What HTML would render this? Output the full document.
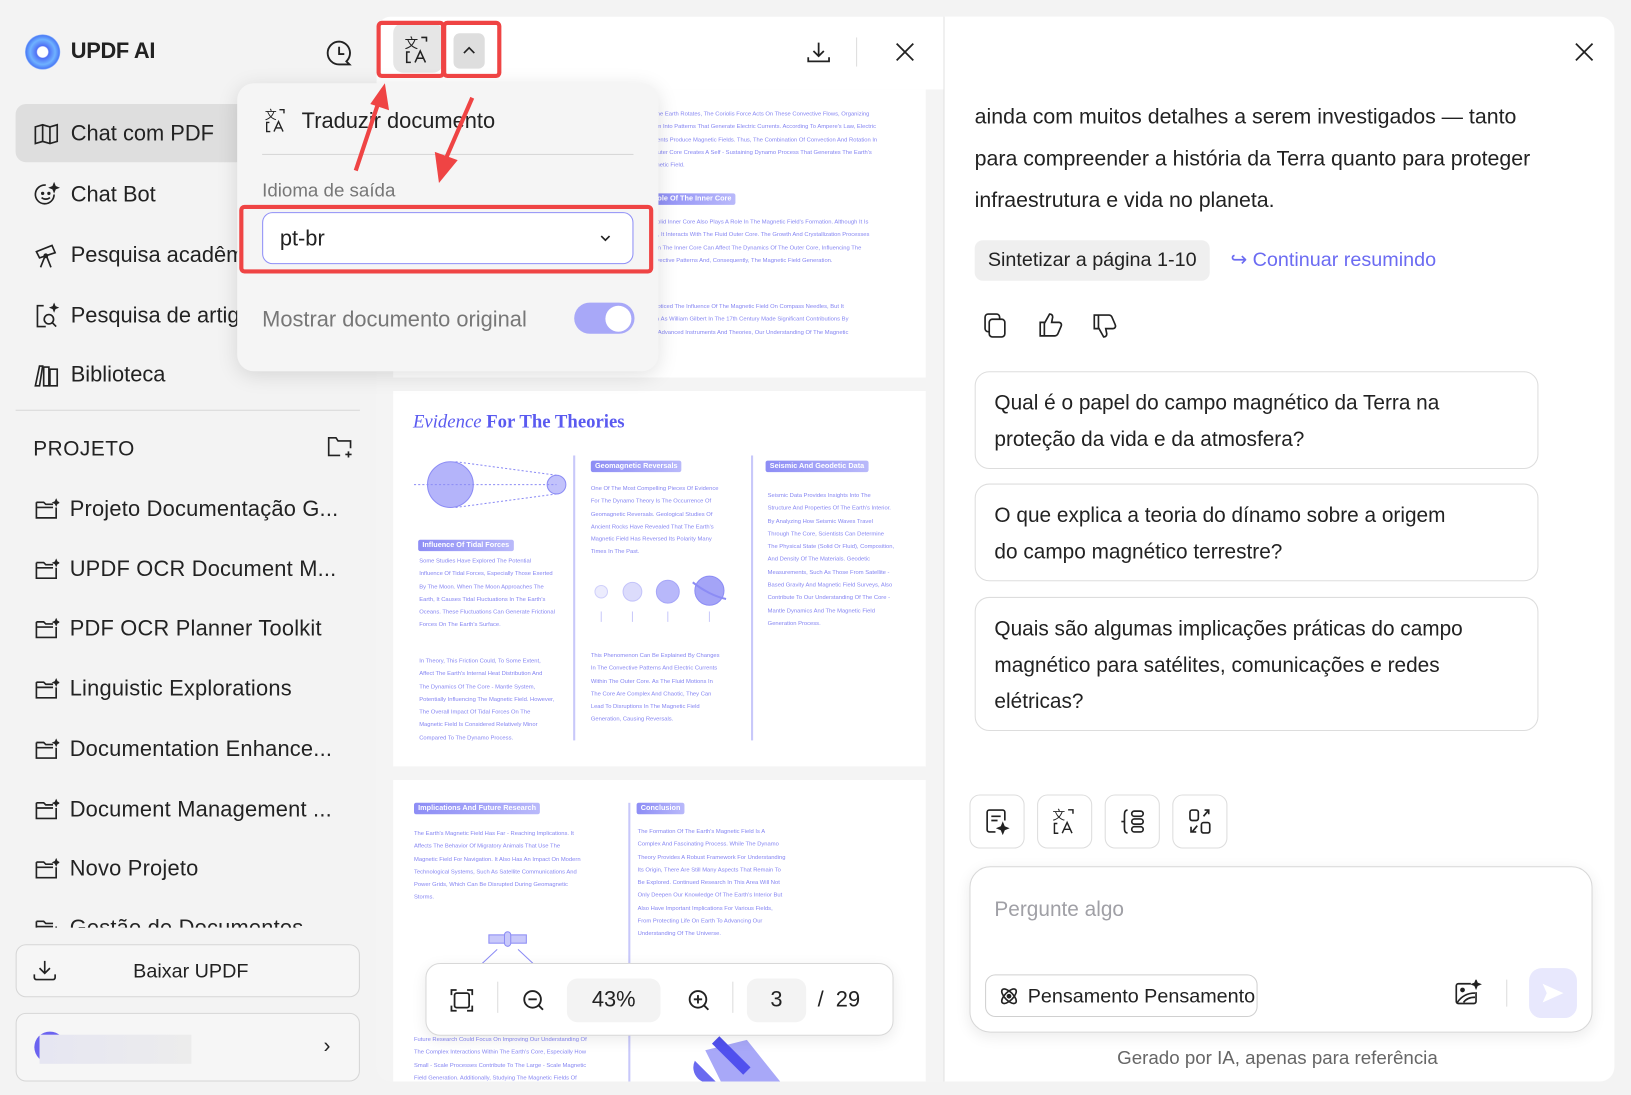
<!DOCTYPE html>
<html><head><meta charset="utf-8"><style>
*{box-sizing:border-box;margin:0;padding:0}
html,body{width:1631px;height:1095px;overflow:hidden;background:#f3f3f3;font-family:"Liberation Sans","Noto Sans CJK SC",sans-serif;color:#222}
#w{position:absolute;left:0;top:0;width:1568px;height:1053px;transform:scale(1.0402,1.0399);transform-origin:0 0;background:#f3f3f3}
.a{position:absolute}
.it{position:absolute;left:32px;display:flex;align-items:center;gap:10px;font-size:21px;white-space:nowrap}
.it svg{flex:none}
.pj{position:absolute;left:33px;display:flex;align-items:center;gap:10px;font-size:21px;white-space:nowrap;letter-spacing:.2px}
.pg{position:absolute;background:#fff;left:378px;width:512px;overflow:hidden}
.t{position:absolute;font-size:5.6px;line-height:12.3px;color:#8585f2;white-space:nowrap}
.hd{position:absolute;background:linear-gradient(90deg,#8d8df5,#b9b9fa);color:#fff;font-size:7px;font-weight:bold;padding:2px 4px;border-radius:2px}
.vl{position:absolute;width:2px;background:#c8c8fa}
.red{position:absolute;border:4px solid #ef4444;border-radius:5px}
.btn4{position:absolute;top:764px;width:53px;height:52px;border:1px solid #ddd;border-radius:10px;background:#fff;display:flex;align-items:center;justify-content:center}
.q{position:absolute;left:937px;width:542px;border:1px solid #ddd;border-radius:14px;background:#fff;font-size:20px;line-height:35px;padding:13px 18px;color:#222}
</style></head><body><div id="w">

<div class="a" style="left:24px;top:33px;width:34px;height:34px;border-radius:50%;background:radial-gradient(circle at 50% 50%,#fff 0 5px,#4f6ff5 6px,#6fb2ff 12px,#4c7cf6 16px,#a7c9ff 17px)"></div>
<div class="a" style="left:68px;top:38px;font-size:21px;font-weight:bold;letter-spacing:-.3px">UPDF AI</div>
<svg class="a" style="left:313px;top:38px" width="26" height="26" viewBox="0 0 26 26" fill="none" stroke="#222" stroke-width="1.8"><path d="M13 2a11 11 0 1 0 0 22h10l-3-3A11 11 0 0 0 13 2z"/><path d="M13 7v7h5"/></svg>

<div class="a" style="left:15px;top:100px;width:260px;height:56px;background:#dedede;border-radius:10px"></div>
<div class="it" style="top:117px"><svg width="26" height="24" viewBox="0 0 26 24" fill="none" stroke="#222" stroke-width="1.6"><path d="M2 5l7-2 7 2 7-2v16l-7 2-7-2-7 2z"/><path d="M9 3v16M16 5v16"/></svg>Chat com PDF</div>
<div class="it" style="top:175px"><svg width="26" height="26" viewBox="0 0 26 26" fill="none" stroke="#222" stroke-width="1.6"><path d="M20 12A9 9 0 1 1 12 3"/><circle cx="9" cy="11" r=".8" fill="#222"/><circle cx="15" cy="11" r=".8" fill="#222"/><path d="M8 15c2 2 6 2 8 0"/><path d="M20 2l1 2.5 2.5 1-2.5 1-1 2.5-1-2.5-2.5-1 2.5-1z" fill="#222"/></svg>Chat Bot</div>
<div class="it" style="top:233px"><svg width="26" height="26" viewBox="0 0 26 26" fill="none" stroke="#222" stroke-width="1.6"><path d="M3 9l15-6 3 7-15 5z"/><path d="M11 14l-4 10M13 14l4 10"/><circle cx="12" cy="13" r="1.5"/></svg>Pesquisa acadêmica</div>
<div class="it" style="top:291px"><svg width="26" height="26" viewBox="0 0 26 26" fill="none" stroke="#222" stroke-width="1.6"><path d="M10 3H4v20h8"/><circle cx="15" cy="16" r="4.5"/><path d="M18 19l4 4"/><path d="M20 2l.8 2 2 .8-2 .8-.8 2-.8-2-2-.8 2-.8z" fill="#222"/></svg>Pesquisa de artigos</div>
<div class="it" style="top:349px"><svg width="26" height="24" viewBox="0 0 26 24" fill="none" stroke="#222" stroke-width="1.6"><path d="M2 22L6 3h3L6 22z"/><path d="M10 4h5v18h-5z"/><path d="M16 6h7v16h-7z"/></svg>Biblioteca</div>
<div class="a" style="left:15px;top:394px;width:331px;height:1px;background:#d8d8d8"></div>
<div class="a" style="left:32px;top:421px;font-size:20px;letter-spacing:.5px">PROJETO</div>
<svg class="a" style="left:314px;top:418px" width="26" height="24" viewBox="0 0 26 24" fill="none" stroke="#222" stroke-width="1.6"><path d="M13 20H2V3h7l2 3h12v7"/><path d="M21 16v6M18 19h6"/></svg>

<div class="pj" style="top:478px"><svg width="24" height="22" viewBox="0 0 24 22" fill="none" stroke="#222" stroke-width="1.6"><path d="M2 4h7l2 2h7M2 4v15h19V9M2 9h16"/><path d="M21 2l.7 1.6 1.6.7-1.6.7L21 6.6l-.7-1.6-1.6-.7 1.6-.7z" fill="#222"/></svg>Projeto Documentação G...</div>
<div class="pj" style="top:536px"><svg width="24" height="22" viewBox="0 0 24 22" fill="none" stroke="#222" stroke-width="1.6"><path d="M2 4h7l2 2h7M2 4v15h19V9M2 9h16"/><path d="M21 2l.7 1.6 1.6.7-1.6.7L21 6.6l-.7-1.6-1.6-.7 1.6-.7z" fill="#222"/></svg>UPDF OCR Document M...</div>
<div class="pj" style="top:593px"><svg width="24" height="22" viewBox="0 0 24 22" fill="none" stroke="#222" stroke-width="1.6"><path d="M2 4h7l2 2h7M2 4v15h19V9M2 9h16"/><path d="M21 2l.7 1.6 1.6.7-1.6.7L21 6.6l-.7-1.6-1.6-.7 1.6-.7z" fill="#222"/></svg>PDF OCR Planner Toolkit</div>
<div class="pj" style="top:651px"><svg width="24" height="22" viewBox="0 0 24 22" fill="none" stroke="#222" stroke-width="1.6"><path d="M2 4h7l2 2h7M2 4v15h19V9M2 9h16"/><path d="M21 2l.7 1.6 1.6.7-1.6.7L21 6.6l-.7-1.6-1.6-.7 1.6-.7z" fill="#222"/></svg>Linguistic Explorations</div>
<div class="pj" style="top:709px"><svg width="24" height="22" viewBox="0 0 24 22" fill="none" stroke="#222" stroke-width="1.6"><path d="M2 4h7l2 2h7M2 4v15h19V9M2 9h16"/><path d="M21 2l.7 1.6 1.6.7-1.6.7L21 6.6l-.7-1.6-1.6-.7 1.6-.7z" fill="#222"/></svg>Documentation Enhance...</div>
<div class="pj" style="top:767px"><svg width="24" height="22" viewBox="0 0 24 22" fill="none" stroke="#222" stroke-width="1.6"><path d="M2 4h7l2 2h7M2 4v15h19V9M2 9h16"/><path d="M21 2l.7 1.6 1.6.7-1.6.7L21 6.6l-.7-1.6-1.6-.7 1.6-.7z" fill="#222"/></svg>Document Management ...</div>
<div class="pj" style="top:824px"><svg width="24" height="22" viewBox="0 0 24 22" fill="none" stroke="#222" stroke-width="1.6"><path d="M2 4h7l2 2h7M2 4v15h19V9M2 9h16"/><path d="M21 2l.7 1.6 1.6.7-1.6.7L21 6.6l-.7-1.6-1.6-.7 1.6-.7z" fill="#222"/></svg>Novo Projeto</div>
<div class="a" style="left:0;top:868px;width:360px;height:24px;overflow:hidden"><div class="pj" style="top:13px"><svg width="24" height="22" viewBox="0 0 24 22" fill="none" stroke="#222" stroke-width="1.6"><path d="M2 4h7l2 2h7M2 4v15h19V9M2 9h16"/></svg>Gestão de Documentos</div></div>

<div class="a" style="left:15px;top:908px;width:331px;height:51px;border:1px solid #d6d6d6;border-radius:10px;background:#f6f6f6"></div>
<svg class="a" style="left:31px;top:922px" width="24" height="22" viewBox="0 0 24 22" fill="none" stroke="#222" stroke-width="1.6"><path d="M12 2v12M7 9l5 5 5-5"/><path d="M2 15v3a2 2 0 0 0 2 2h16a2 2 0 0 0 2-2v-3"/></svg>
<div class="a" style="left:128px;top:924px;font-size:19px">Baixar UPDF</div>
<div class="a" style="left:15px;top:974px;width:331px;height:66px;border:1px solid #d6d6d6;border-radius:10px;background:#f6f6f6"></div>
<div class="a" style="left:33px;top:992px;width:30px;height:30px;border-radius:50%;background:#6b63f0"></div>
<div class="a" style="left:38px;top:995px;width:146px;height:28px;background:linear-gradient(90deg,#e6e6f2,#ececec)"></div>
<div class="a" style="left:311px;top:995px;font-size:20px">&#8250;</div>

<div class="a" style="left:362px;top:16px;width:546px;height:1024px;background:#f4f4f4;border-radius:14px 0 0 14px;overflow:hidden">
 <div class="a" style="left:0;top:0;width:546px;height:70px;background:#fff"></div>
</div>
<div class="a" style="left:378px;top:22px;width:48px;height:48px;background:#e6e6e6;border-radius:10px"></div>
<svg class="a" style="left:386px;top:32px" width="32" height="32" viewBox="0 0 32 32" fill="none" stroke="#222" stroke-width="1.5"><text x="3" y="14" font-size="13" fill="#222" stroke="none" font-family="Noto Sans CJK SC">文</text><path d="M19 4h5v4M8 18H5v10h4"/><path d="M13 28l5-11 5 11M15 24h6"/></svg>
<div class="a" style="left:436px;top:32px;width:30px;height:34px;background:#dedede;border-radius:6px"></div>
<svg class="a" style="left:443px;top:42px" width="16" height="12" viewBox="0 0 16 12" fill="none" stroke="#222" stroke-width="1.6"><path d="M3 9l5-5 5 5"/></svg>
<svg class="a" style="left:774px;top:38px" width="26" height="26" viewBox="0 0 26 26" fill="none" stroke="#222" stroke-width="1.7"><path d="M13 3v13M8 11l5 5 5-5"/><path d="M3 17v4h20v-4"/></svg>
<div class="a" style="left:823px;top:36px;width:1px;height:28px;background:#ddd"></div>
<svg class="a" style="left:860px;top:40px" width="20" height="20" viewBox="0 0 20 20" stroke="#222" stroke-width="1.7"><path d="M2 2l16 16M18 2L2 18"/></svg>

<div class="pg" style="top:86px;height:277px">
 <div class="t" style="left:250px;top:18px">The Earth Rotates, The Coriolis Force Acts On These Convective Flows, Organizing<br>em Into Patterns That Generate Electric Currents. According To Ampere's Law, Electric<br>rrents Produce Magnetic Fields. Thus, The Combination Of Convection And Rotation In<br>Outer Core Creates A Self - Sustaining Dynamo Process That Generates The Earth's<br>gnetic Field.</div>
 <div class="hd" style="left:250px;top:100px">ole Of The Inner Core</div>
 <div class="t" style="left:250px;top:122px">Solid Inner Core Also Plays A Role In The Magnetic Field's Formation. Although It Is<br>id, It Interacts With The Fluid Outer Core. The Growth And Crystallization Processes<br>hin The Inner Core Can Affect The Dynamics Of The Outer Core, Influencing The<br>nvective Patterns And, Consequently, The Magnetic Field Generation.</div>
 <div class="t" style="left:250px;top:203px">Noticed The Influence Of The Magnetic Field On Compass Needles, But It<br>ch As William Gilbert In The 17th Century Made Significant Contributions By<br>e Advanced Instruments And Theories, Our Understanding Of The Magnetic</div>
</div>
<div class="pg" style="top:376px;height:361px">
 <div class="a" style="left:19px;top:19px;font-family:'Liberation Serif',serif;font-size:18px;color:#5a5af0"><i>Evidence</i> <b>For The Theories</b></div>
 <svg class="a" style="left:20px;top:57px" width="150" height="66" viewBox="0 0 150 66"><circle cx="35" cy="33" r="22" fill="#b4b4fa" stroke="#8c8cf5"/><circle cx="137" cy="33" r="9" fill="#c2c2fb" stroke="#8c8cf5"/><path d="M40 11L137 24M40 55L137 42M0 33h137" stroke="#8c8cf5" stroke-dasharray="2 2" fill="none"/></svg>
 <div class="hd" style="left:24px;top:143px">Influence Of Tidal Forces</div>
 <div class="t" style="left:25px;top:158px">Some Studies Have Explored The Potential<br>Influence Of Tidal Forces, Especially Those Exerted<br>By The Moon. When The Moon Approaches The<br>Earth, It Causes Tidal Fluctuations In The Earth's<br>Oceans. These Fluctuations Can Generate Frictional<br>Forces On The Earth's Surface.</div>
 <div class="t" style="left:25px;top:254px">In Theory, This Friction Could, To Some Extent,<br>Affect The Earth's Internal Heat Distribution And<br>The Dynamics Of The Core - Mantle System,<br>Potentially Influencing The Magnetic Field. However,<br>The Overall Impact Of Tidal Forces On The<br>Magnetic Field Is Considered Relatively Minor<br>Compared To The Dynamo Process.</div>
 <div class="vl" style="left:173px;top:62px;height:274px"></div>
 <div class="hd" style="left:190px;top:67px">Geomagnetic Reversals</div>
 <div class="t" style="left:190px;top:88px">One Of The Most Compelling Pieces Of Evidence<br>For The Dynamo Theory Is The Occurrence Of<br>Geomagnetic Reversals. Geological Studies Of<br>Ancient Rocks Have Revealed That The Earth's<br>Magnetic Field Has Reversed Its Polarity Many<br>Times In The Past.</div>
 <svg class="a" style="left:190px;top:176px" width="140" height="60" viewBox="0 0 140 60"><circle cx="10" cy="17" r="6" fill="#ececfd" stroke="#d0d0fb"/><circle cx="40" cy="17" r="9" fill="#dcdcfc" stroke="#c4c4fa"/><circle cx="74" cy="17" r="11" fill="#b8b8fa" stroke="#a6a6f8"/><circle cx="114" cy="16" r="14" fill="#a4a4f7" stroke="#8c8cf5"/><path d="M98 8c10 8 22 14 32 16" stroke="#8c8cf5" fill="none" stroke-width="2"/><path d="M10 36v10M40 36v10M74 36v10M114 36v10" stroke="#c8c8fa"/></svg>
 <div class="t" style="left:190px;top:249px">This Phenomenon Can Be Explained By Changes<br>In The Convective Patterns And Electric Currents<br>Within The Outer Core. As The Fluid Motions In<br>The Core Are Complex And Chaotic, They Can<br>Lead To Disruptions In The Magnetic Field<br>Generation, Causing Reversals.</div>
 <div class="vl" style="left:344px;top:62px;height:274px"></div>
 <div class="hd" style="left:358px;top:67px">Seismic And Geodetic Data</div>
 <div class="t" style="left:360px;top:95px">Seismic Data Provides Insights Into The<br>Structure And Properties Of The Earth's Interior.<br>By Analyzing How Seismic Waves Travel<br>Through The Core, Scientists Can Determine<br>The Physical State (Solid Or Fluid), Composition,<br>And Density Of The Materials. Geodetic<br>Measurements, Such As Those From Satellite -<br>Based Gravity And Magnetic Field Surveys, Also<br>Contribute To Our Understanding Of The Core -<br>Mantle Dynamics And The Magnetic Field<br>Generation Process.</div>
</div>
<div class="pg" style="top:750px;height:290px">
 <div class="hd" style="left:20px;top:22px">Implications And Future Research</div>
 <div class="t" style="left:20px;top:46px">The Earth's Magnetic Field Has Far - Reaching Implications. It<br>Affects The Behavior Of Migratory Animals That Use The<br>Magnetic Field For Navigation. It Also Has An Impact On Modern<br>Technological Systems, Such As Satellite Communications And<br>Power Grids, Which Can Be Disrupted During Geomagnetic<br>Storms.</div>
 <svg class="a" style="left:60px;top:135px" width="110" height="45" viewBox="0 0 110 45"><rect x="32" y="14" width="16" height="8" fill="#c8c8fa" stroke="#8c8cf5"/><rect x="52" y="14" width="16" height="8" fill="#c8c8fa" stroke="#8c8cf5"/><rect x="47" y="11" width="6" height="14" rx="3" fill="#c8c8fa" stroke="#8c8cf5"/><path d="M40 28L25 42M60 28l15 14" stroke="#8c8cf5"/></svg>
 <div class="vl" style="left:226px;top:22px;height:270px"></div>
 <div class="hd" style="left:234px;top:22px">Conclusion</div>
 <div class="t" style="left:235px;top:44px">The Formation Of The Earth's Magnetic Field Is A<br>Complex And Fascinating Process. While The Dynamo<br>Theory Provides A Robust Framework For Understanding<br>Its Origin, There Are Still Many Aspects That Remain To<br>Be Explored. Continued Research In This Area Will Not<br>Only Deepen Our Knowledge Of The Earth's Interior But<br>Also Have Important Implications For Various Fields,<br>From Protecting Life On Earth To Advancing Our<br>Understanding Of The Universe.</div>
 <div class="t" style="left:20px;top:244px">Future Research Could Focus On Improving Our Understanding Of<br>The Complex Interactions Within The Earth's Core, Especially How<br>Small - Scale Processes Contribute To The Large - Scale Magnetic<br>Field Generation. Additionally, Studying The Magnetic Fields Of</div>
 <svg class="a" style="left:280px;top:240px" width="110" height="60" viewBox="0 0 110 60"><path d="M20 20l40 -10 40 50H40z" fill="#a8a8f8"/><path d="M10 30a15 15 0 0 0 20 20z" fill="#6a6af0"/><path d="M30 10l30 30" stroke="#5050ee" stroke-width="10"/></svg>
</div>
<div class="a" style="left:409px;top:926px;width:450px;height:70px;background:#fff;border:1px solid #d8d8d8;border-radius:14px;box-shadow:0 4px 14px rgba(0,0,0,.08)"></div>
<svg class="a" style="left:432px;top:950px" width="24" height="24" viewBox="0 0 24 24" fill="none" stroke="#222" stroke-width="1.7"><path d="M2 7V2h5M17 2h5v5M22 17v5h-5M7 22H2v-5"/><rect x="5" y="5" width="14" height="14" rx="2"/></svg>
<div class="a" style="left:478px;top:944px;width:1px;height:30px;background:#ddd"></div>
<svg class="a" style="left:501px;top:950px" width="24" height="24" viewBox="0 0 24 24" fill="none" stroke="#222" stroke-width="1.8"><circle cx="11" cy="11" r="8"/><path d="M17 17l4 4M7 11h8"/></svg>
<div class="a" style="left:545px;top:941px;width:90px;height:42px;background:#f3f3f3;border-radius:10px;font-size:21px;text-align:center;line-height:42px">43%</div>
<svg class="a" style="left:660px;top:950px" width="24" height="24" viewBox="0 0 24 24" fill="none" stroke="#222" stroke-width="1.8"><circle cx="11" cy="11" r="8"/><path d="M17 17l4 4M7 11h8M11 7v8"/></svg>
<div class="a" style="left:704px;top:944px;width:1px;height:30px;background:#ddd"></div>
<div class="a" style="left:718px;top:941px;width:57px;height:42px;background:#f3f3f3;border-radius:10px;font-size:21px;text-align:center;line-height:42px">3</div>
<div class="a" style="left:786px;top:950px;font-size:21px">/&nbsp; 29</div>

<div class="a" style="left:228px;top:80px;width:405px;height:277px;background:#f5f5f5;border-radius:16px;box-shadow:0 4px 20px rgba(0,0,0,.12)"></div>
<svg class="a" style="left:252px;top:101px" width="28" height="30" viewBox="0 0 32 32" fill="none" stroke="#222" stroke-width="1.5"><text x="3" y="14" font-size="13" fill="#222" stroke="none" font-family="Noto Sans CJK SC">文</text><path d="M19 4h5v4M8 18H5v10h4"/><path d="M13 28l5-11 5 11M15 24h6"/></svg>
<div class="a" style="left:290px;top:105px;font-size:21px">Traduzir documento</div>
<div class="a" style="left:252px;top:148px;width:357px;height:1px;background:#d6d6d6"></div>
<div class="a" style="left:252px;top:173px;font-size:18px;color:#777">Idioma de saída</div>
<div class="a" style="left:252px;top:204px;width:357px;height:50px;background:#fff;border:1.5px solid #8f8ff7;border-radius:10px"></div>
<div class="a" style="left:269px;top:218px;font-size:21px">pt-br</div>
<svg class="a" style="left:576px;top:224px" width="12" height="10" viewBox="0 0 12 10" fill="none" stroke="#222" stroke-width="1.6"><path d="M2 3l4 4 4-4"/></svg>
<div class="a" style="left:252px;top:296px;font-size:21px;color:#777">Mostrar documento original</div>
<div class="a" style="left:552px;top:291px;width:58px;height:30px;background:#a8a8f8;border-radius:15px"></div>
<div class="a" style="left:582px;top:294px;width:25px;height:25px;background:#fff;border-radius:50%"></div>

<div class="red" style="left:362px;top:20px;width:66px;height:55px"></div>
<div class="red" style="left:425px;top:20px;width:57px;height:55px"></div>
<div class="red" style="left:230px;top:197px;width:398px;height:66px"></div>
<svg class="a" style="left:330px;top:80px" width="140" height="100" viewBox="0 0 140 100"><path d="M12 84L34 18" stroke="#ef4444" stroke-width="4"/><path d="M26 20L40 0 44 26z" fill="#ef4444"/><path d="M124 14L98 74" stroke="#ef4444" stroke-width="4"/><path d="M88 66L92 96 110 74z" fill="#ef4444"/></svg>

<div class="a" style="left:907px;top:16px;width:1px;height:1024px;background:#e2e2e2"></div>
<div class="a" style="left:908px;top:16px;width:644px;height:1024px;background:#fff;border-radius:0 14px 14px 0"></div>
<svg class="a" style="left:1513px;top:40px" width="20" height="20" viewBox="0 0 20 20" stroke="#222" stroke-width="1.7"><path d="M2 2l16 16M18 2L2 18"/></svg>
<div class="a" style="left:937px;top:93px;font-size:20.5px;line-height:40px;width:600px">ainda com muitos detalhes a serem investigados — tanto<br>para compreender a história da Terra quanto para proteger<br>infraestrutura e vida no planeta.</div>
<div class="a" style="left:937px;top:231px;width:226px;height:39px;background:#efefef;border-radius:8px;font-size:19px;line-height:40px;text-align:center">Sintetizar a página 1-10</div>
<div class="a" style="left:1183px;top:239px;font-size:19px;color:#6b6bf2">&#8618; Continuar resumindo</div>
<svg class="a" style="left:944px;top:300px" width="28" height="26" viewBox="0 0 28 26" fill="none" stroke="#222" stroke-width="1.6"><rect x="7" y="7" width="15" height="17" rx="3"/><path d="M17 7V5a3 3 0 0 0-3-3H6a3 3 0 0 0-3 3v11a3 3 0 0 0 3 3h1"/></svg>
<svg class="a" style="left:997px;top:299px" width="26" height="26" viewBox="0 0 26 26" fill="none" stroke="#222" stroke-width="1.6"><path d="M3 11h4v13H3zM7 12l5-9c2 0 3 1 3 3l-1 5h7c2 0 3 2 2 4l-3 7c-.5 1-1.5 2-3 2H7"/></svg>
<svg class="a" style="left:1049px;top:301px" width="26" height="26" viewBox="0 0 26 26" fill="none" stroke="#222" stroke-width="1.6"><path d="M3 2h4v13H3zM7 14l5 9c2 0 3-1 3-3l-1-5h7c2 0 3-2 2-4l-3-7c-.5-1-1.5-2-3-2H7"/></svg>

<div class="q" style="top:357px;height:94px">Qual é o papel do campo magnético da Terra na<br>proteção da vida e da atmosfera?</div>
<div class="q" style="top:465px;height:94px">O que explica a teoria do dínamo sobre a origem<br>do campo magnético terrestre?</div>
<div class="q" style="top:574px;height:129px">Quais são algumas implicações práticas do campo<br>magnético para satélites, comunicações e redes<br>elétricas?</div>

<div class="btn4" style="left:932px"><svg width="28" height="28" viewBox="0 0 28 28" fill="none" stroke="#222" stroke-width="1.6"><path d="M12 24H6a2 2 0 0 1-2-2V5a2 2 0 0 1 2-2h13a2 2 0 0 1 2 2v8"/><path d="M8 9h9M8 13h6"/><path d="M19 16l1.3 3.2 3.2 1.3-3.2 1.3L19 25l-1.3-3.2-3.2-1.3 3.2-1.3z" fill="#222"/></svg></div>
<div class="btn4" style="left:997px"><svg width="30" height="30" viewBox="0 0 32 32" fill="none" stroke="#222" stroke-width="1.5"><text x="3" y="14" font-size="13" fill="#222" stroke="none" font-family="Noto Sans CJK SC">文</text><path d="M19 4h5v4M8 18H5v10h4"/><path d="M13 28l5-11 5 11M15 24h6"/></svg></div>
<div class="btn4" style="left:1062px"><svg width="28" height="28" viewBox="0 0 28 28" fill="none" stroke="#222" stroke-width="1.6"><path d="M9 3C6 3 6 6 6 8v12c0 2 0 5 3 5M3 14h3"/><rect x="13" y="4" width="11" height="5" rx="2.5"/><rect x="13" y="11.5" width="11" height="5" rx="2.5"/><rect x="13" y="19" width="11" height="5" rx="2.5"/></svg></div>
<div class="btn4" style="left:1127px"><svg width="28" height="28" viewBox="0 0 28 28" fill="none" stroke="#222" stroke-width="1.6"><rect x="4" y="3" width="8" height="10" rx="2"/><rect x="15" y="15" width="8" height="10" rx="2"/><path d="M17 9l5-6M18 3h4v4M11 18l-5 6M5 19v5h5"/></svg></div>

<div class="a" style="left:932px;top:833px;width:599px;height:160px;background:#fff;border:1px solid #d8d8d8;border-radius:20px;box-shadow:0 4px 14px rgba(0,0,0,.08)"></div>
<div class="a" style="left:956px;top:864px;font-size:20px;color:#a0a0a6">Pergunte algo</div>
<div class="a" style="left:947px;top:937px;width:262px;height:41px;border:1px solid #d0d0d0;border-radius:10px"></div>
<svg class="a" style="left:959px;top:947px" width="22" height="22" viewBox="0 0 22 22" fill="none" stroke="#222" stroke-width="1.6"><ellipse cx="11" cy="11" rx="9" ry="4" transform="rotate(45 11 11)"/><ellipse cx="11" cy="11" rx="9" ry="4" transform="rotate(-45 11 11)"/><circle cx="11" cy="11" r="1.5" fill="#222"/></svg>
<div class="a" style="left:988px;top:948px;font-size:19px">Pensamento Pensamento</div>
<svg class="a" style="left:1397px;top:942px" width="28" height="26" viewBox="0 0 28 26" fill="none" stroke="#222" stroke-width="1.6"><path d="M17 4H5a2 2 0 0 0-2 2v15a2 2 0 0 0 2 2h15a2 2 0 0 0 2-2v-9"/><circle cx="9" cy="10" r="1.5" fill="#222"/><path d="M4 22c4-6 10-9 17-9M10 22c2-3 6-5 11-5"/><path d="M22 1l1 2.5 2.5 1-2.5 1-1 2.5-1-2.5-2.5-1 2.5-1z" fill="#222"/></svg>
<div class="a" style="left:1448px;top:942px;width:1px;height:26px;background:#ddd"></div>
<div class="a" style="left:1470px;top:931px;width:46px;height:48px;background:#e8e8fd;border-radius:12px"></div>
<svg class="a" style="left:1481px;top:944px" width="24" height="22" viewBox="0 0 24 22"><path d="M2 2l20 9-20 9 4-9z" fill="#fff"/></svg>
<div class="a" style="left:1074px;top:1007px;font-size:18px;color:#666">Gerado por IA, apenas para referência</div>

</div></body></html>
